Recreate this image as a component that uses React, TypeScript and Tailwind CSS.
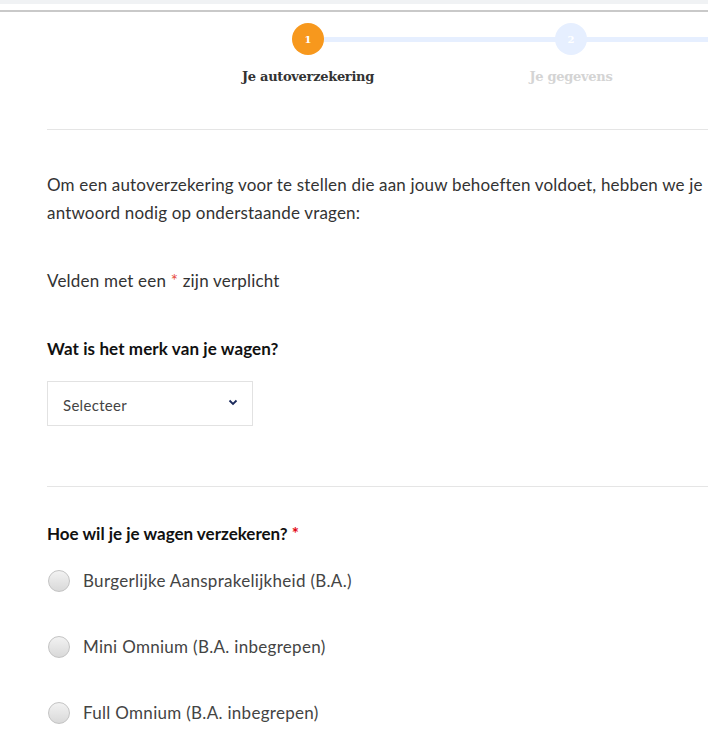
import React from "react";

const body = { fontFamily: "Lato, 'Noto Sans', sans-serif" };
const slab = { fontFamily: "'DejaVu Serif', 'Liberation Serif', serif" };

function Radio({ label }: { label: string }) {
  return (
    <div className="flex items-center h-[22px]">
      <span className="w-[22px] h-[22px] rounded-full border border-[#c4c4c4] bg-gradient-to-b from-[#f2f2f2] to-[#d9d9d9] shrink-0" />
      <span className="ml-[13px] text-[17px] text-[#444] tracking-[0.3px]">{label}</span>
    </div>
  );
}

export default function App() {
  return (
    <div className="w-[708px] h-[754px] bg-white overflow-hidden relative" style={body}>
      <div className="h-[4px] bg-[#f0f2f4]" />
      <div className="h-[6px]" />
      <div className="h-[2px] bg-[#c9c9c9]" />
      {/* stepper */}
      <div className="relative h-[117px]">
        <div className="absolute left-[324px] right-0 top-[25px] h-[5px] bg-[#e6efff]" />
        <div className="absolute left-[292px] top-[11px] w-[32px] h-[32px] rounded-full bg-[#f7981d] flex items-center justify-center text-white text-[10px] font-bold" style={slab}>1</div>
        <div className="absolute left-[555px] top-[11px] w-[32px] h-[32px] rounded-full bg-[#e6efff] flex items-center justify-center text-white text-[10px] font-bold" style={slab}>2</div>
        <div className="absolute left-[208px] w-[200px] top-[55px] text-center text-[13px] font-bold text-[#333] tracking-[-0.3px]" style={slab}>Je autoverzekering</div>
        <div className="absolute left-[471px] w-[200px] top-[55px] text-center text-[13px] font-bold text-[#d4d4d4] tracking-[-0.3px]" style={slab}>Je gegevens</div>
      </div>
      <div className="ml-[47px] h-px bg-[#e5e5e5]" />
      <div className="pl-[47px] pr-0">
        <p className="mt-[41px] text-[17px] leading-[28px] text-[#333] whitespace-nowrap tracking-[0.18px]">
          Om een autoverzekering voor te stellen die aan jouw behoeften voldoet, hebben we je
          <br />
          antwoord nodig op onderstaande vragen:
        </p>
        <p className="mt-[40px] text-[17px] leading-[28px] text-[#333] tracking-[0.2px]">
          Velden met een <span className="text-[#e74c3c]">*</span> zijn verplicht
        </p>
        <h2 className="mt-[40px] text-[17px] leading-[28px] font-bold text-[#111] tracking-[0.1px]">Wat is het merk van je wagen?</h2>
        <div className="mt-[18px] w-[206px] h-[45px] border border-[#e2e2e2] flex items-center justify-between pl-[15px] pr-[14px]">
          <span className="text-[15px] text-[#444] mt-[4px] tracking-[0.3px]">Selecteer</span>
          <svg width="10" height="7" viewBox="0 0 10 7" className="mt-[-2px]">
            <path d="M1.5 1.5 L5 5 L8.5 1.5" fill="none" stroke="#1b2a5c" strokeWidth="1.8" />
          </svg>
        </div>
      </div>
      <div className="ml-[47px] mt-[60px] h-px bg-[#e5e5e5]" />
      <div className="pl-[47px]">
        <h2 className="mt-[33px] text-[17px] leading-[28px] font-bold text-[#111]">
          Hoe wil je je wagen verzekeren? <span className="text-[#e30613]">*</span>
        </h2>
        <div className="mt-[22px] flex flex-col gap-[44px] pl-px">
          <Radio label="Burgerlijke Aansprakelijkheid (B.A.)" />
          <Radio label="Mini Omnium (B.A. inbegrepen)" />
          <Radio label="Full Omnium (B.A. inbegrepen)" />
        </div>
      </div>
    </div>
  );
}
